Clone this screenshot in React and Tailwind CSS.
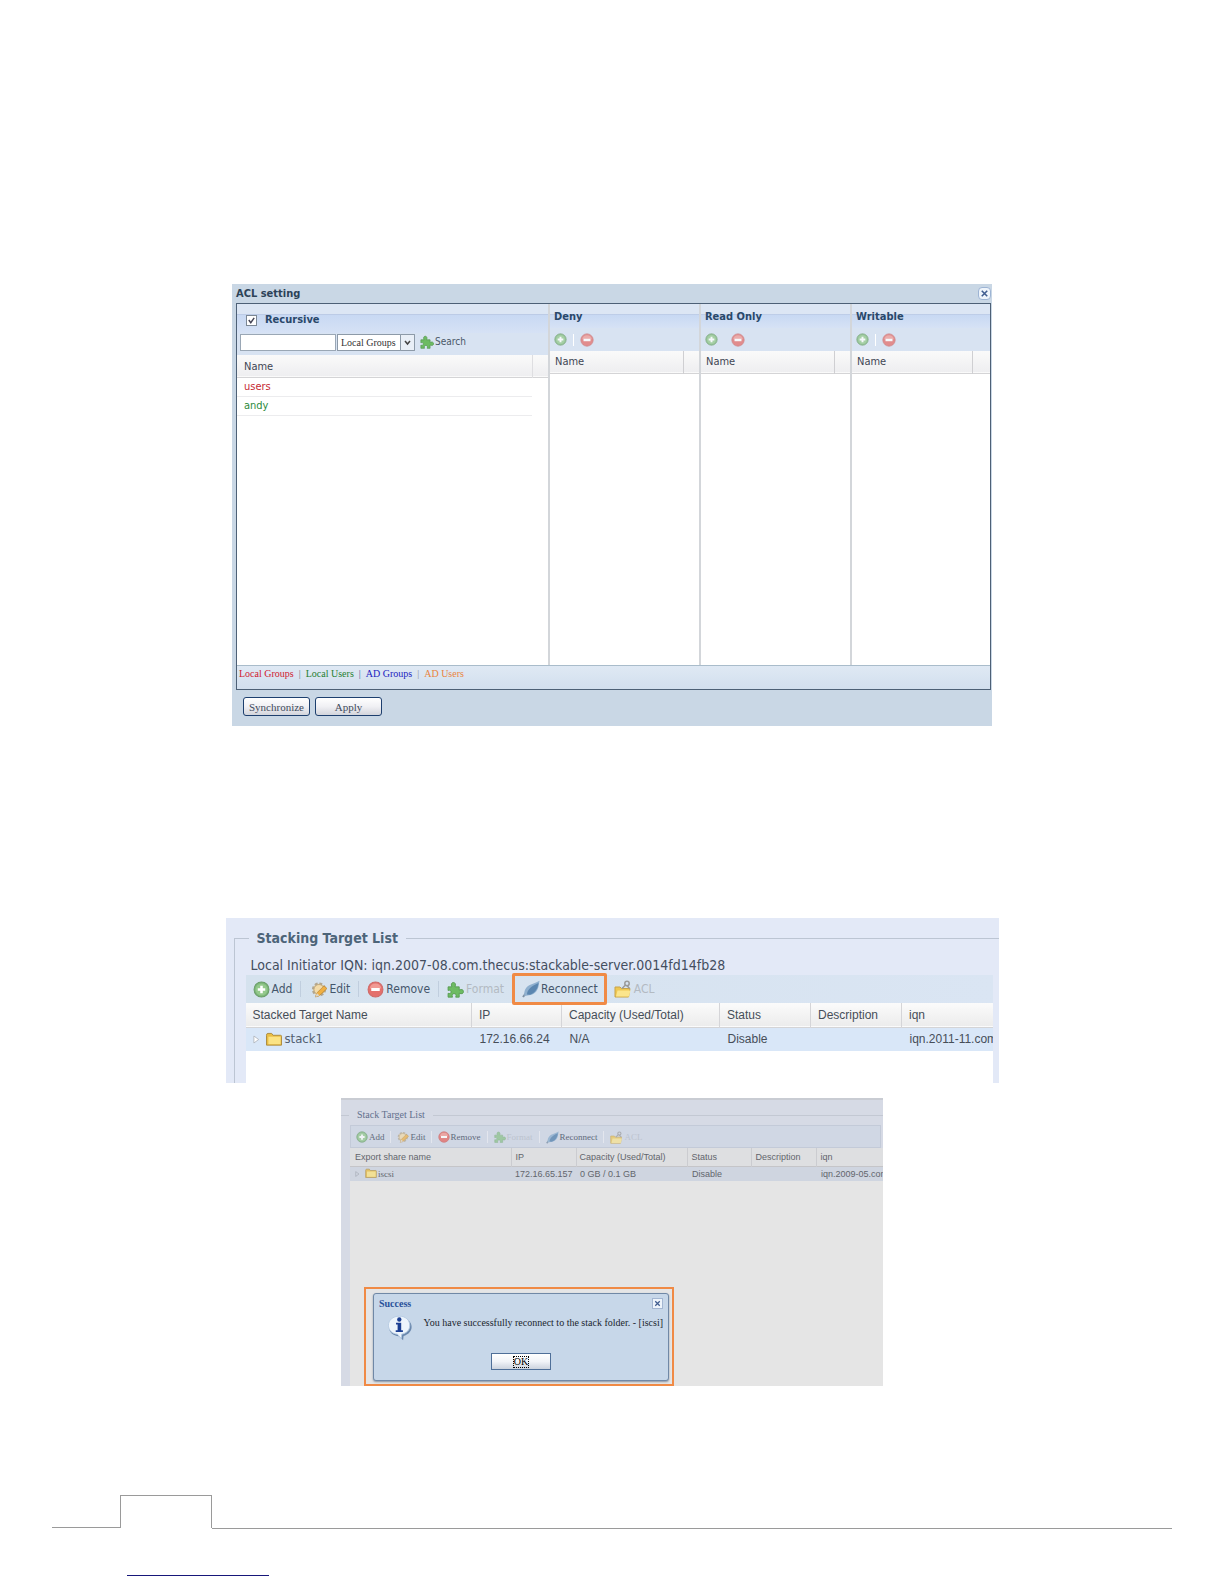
import React, { useState } from 'react';

const AddIcon = ({ className }) => (
    <svg viewBox="0 0 16 16" className={className} aria-hidden="true">
        <circle cx="8" cy="8" r="7" fill="#7fb97a" stroke="#6a9d68" />
        <circle cx="8" cy="8" r="5.5" fill="#94c98c" />
        <path d="M8 4.5v7M4.5 8h7" stroke="#fff" strokeWidth="2.4" />
    </svg>
);

const RemoveIcon = ({ className }) => (
    <svg viewBox="0 0 16 16" className={className} aria-hidden="true">
        <circle cx="8" cy="8" r="7" fill="#e4706c" stroke="#cf6a68" />
        <path d="M2.5 7a5.6 5.6 0 0 1 11 0z" fill="#f19a94" />
        <path d="M4 8h8" stroke="#fff" strokeWidth="2.8" />
    </svg>
);

const EditIcon = ({ className }) => (
    <svg viewBox="0 0 18 16" className={className} aria-hidden="true">
        <circle cx="8" cy="8" r="5.8" fill="#e9c47c" stroke="#b3a68f" strokeWidth="2.6" strokeDasharray="2.8 1.7" />
        <circle cx="8" cy="8" r="5" fill="#f3dba8" stroke="#b9a47d" strokeWidth="0.8" />
        <path d="M4.5 15.500l1.300-4L13 4.400l3 2.600L8.500 14z" fill="#f0b043" stroke="#b98532" strokeWidth="0.7" />
        <path d="M4.500 15.500l1.300-4L8.500 14z" fill="#ded6c8" />
    </svg>
);

const PuzzleIcon = ({ className }) => (
    <svg viewBox="0 0 16 16" className={className} aria-hidden="true">
        <path
            d="M1 5.5h3.6C3.4 3 4.400 1.400 6 1.400s2.700 1.600 1.500 4.100h4v3C14 7.300 15.500 8.300 15.500 10s-1.500 2.600-4 1.500v3.700H8.200c.9-2.200 0-3.300-1.500-3.300s-2.400 1.100-1.500 3.300H1v-3.600c1.900.6 2.800-.2 2.800-1.400S2.900 8.200 1 8.900z"
            fill="#6dbb62"
            stroke="#55984f"
            strokeWidth="0.8"
        />
    </svg>
);

const PlugIcon = ({ className }) => (
    <svg viewBox="0 0 18 18" className={className} aria-hidden="true">
        <path d="M1 17l3-4" stroke="#7d8fa3" strokeWidth="2" />
        <path d="M2.500 16C1.500 11 4 6 9 4.500l5-2L17.500.8l-.8 4.600C16 10 13 14 8.500 15z" fill="#8fb0cf" />
        <path d="M5 14.500C5 10 9 6 16.500 3 16 8.500 13 13 8 14.800z" fill="#5b86b0" />
    </svg>
);

const FolderIcon = ({ className }) => (
    <svg viewBox="0 0 18 16" className={className} aria-hidden="true">
        <path d="M1 3.500Q1 1.500 2.500 1.500h4L8 3.500h8q1 0 1 1V14H1z" fill="#e9be45" stroke="#ab8a3d" />
        <path d="M3 5h13v8H3z" fill="#fbe384" />
    </svg>
);

const AclIcon = ({ className }) => (
    <svg viewBox="0 0 18 18" className={className} aria-hidden="true">
        <path d="M1 7h5l1.500 1.500H16L14.500 17H1z" fill="#eec752" stroke="#c7a348" />
        <path d="M3.500 10.500h13L15 16.500H2z" fill="#fbe58c" />
        <circle cx="13" cy="3.500" r="2.200" fill="none" stroke="#9a9a9a" strokeWidth="1.500" />
        <path d="M11.500 5L8 8.500M13 5.500l2.500 3" stroke="#9a9a9a" strokeWidth="1.500" />
    </svg>
);

const InfoIcon = ({ className }) => (
    <svg viewBox="0 0 28 28" className={className} aria-hidden="true">
        <path d="M14 3c7 0 12 4.500 12 10 0 4.500-3.500 8-8.500 9.500L17 27l-4.500-4.200C6.500 22.300 2 18.500 2 13 2 7 7 3 14 3z" fill="#6b89ae" />
        <path d="M13 1.500c6.500 0 11 4 11 9.500s-3.500 8.500-8.500 9.500L15 25l-4-4.500C5 20 1.500 16 1.500 11S6 1.500 13 1.500z" fill="#eef5fc" stroke="#b7cbe2" />
        <circle cx="13" cy="5" r="2.300" fill="#1c3f93" />
        <path d="M9.500 8.500h5.500v8h1.800v1.800H9.200v-1.800h2v-6.200H9.500z" fill="#1c3f93" />
    </svg>
);

const CloseIcon = ({ className }) => (
    <svg viewBox="0 0 12 12" className={className} aria-hidden="true">
        <path d="M3 3l6 6M9 3l-6 6" stroke="#3f5c8f" strokeWidth="1.700" />
    </svg>
);

const accessLists = [
    { title: 'Deny', width: 'w-[151px]', handle: 'w-4', separator: true },
    { title: 'Read Only', width: 'w-[151px]', handle: 'w-4', separator: false },
    { title: 'Writable', width: 'w-[140px]', handle: 'w-[18px]', separator: true },
];

const members = [
    { name: 'users', color: 'text-[#c62a33]' },
    { name: 'andy', color: 'text-[#2c8a3a]' },
];

const AccessColumn = ({ list }) => (
    <section className={`${list.width} flex flex-col border-l-2 border-[#d3d6da] bg-white`}>
        <div className="h-[11px] border-b border-[#bccbe6] bg-[#dce6f4]"></div>
        <h3 className="-mt-2 h-[21px] bg-linear-to-b from-transparent from-35% via-[#c8d9f3] via-40% to-[#d6e2f5] pl-1 text-[11px] leading-[20px] font-bold text-[#29486a]">
            {list.title}
        </h3>
        <div className="flex h-[23px] items-center bg-[#d8e3f2] pl-1">
            <button aria-label={`Add to ${list.title}`} className="opacity-75">
                <AddIcon className="h-[13px] w-[13px]" />
            </button>
            <span className={`mx-[6px] h-3 w-px ${list.separator ? 'bg-white' : ''}`}></span>
            <button aria-label={`Remove from ${list.title}`} className="opacity-75">
                <RemoveIcon className="h-[14px] w-[14px]" />
            </button>
        </div>
        <table className="w-full table-fixed">
            <thead>
                <tr className="h-[22px] border-b border-[#d4d4d6] bg-linear-to-b from-[#fafafa] to-[#eeeef0]">
                    <th className="pt-px pl-[5px] text-left text-[11px] leading-4 font-normal text-[#3f4654]">Name</th>
                    <th className={`${list.handle} border-l border-[#cfcfd2]`}></th>
                </tr>
            </thead>
        </table>
    </section>
);

const AclSetting = () => {
    const [recursive, setRecursive] = useState(true);
    const [query, setQuery] = useState('');

    return (
        <section className="mx-auto w-full max-w-[760px] bg-[#c9d7e5] pr-px pb-[10px] pl-1 font-['DejaVu_Sans_Condensed','DejaVu_Sans',sans-serif]">
            <header className="flex h-[19px] items-center justify-between">
                <h2 className="text-[11px] leading-4 font-bold text-[#2c4257]">ACL setting</h2>
                <button aria-label="Close" className="rounded-sm border border-[#9db4d4] bg-[#eef4fb]">
                    <CloseIcon className="h-[11px] w-[11px]" />
                </button>
            </header>
            <div className="border border-[#4d6076] bg-[#d9e4f1]">
                <div className="flex h-[361px]">
                    <section className="flex flex-1 flex-col bg-white">
                        <div className="h-[11px] border-b border-[#bccbe6] bg-[#dce6f4]"></div>
                        <label className="flex h-[18px] items-center gap-2 bg-linear-to-b from-[#c8d9f3] to-[#d6e2f5] pb-2 pl-[9px] text-[11px] font-bold text-[#29486a]">
                            <input
                                type="checkbox"
                                checked={recursive}
                                onChange={(e) => setRecursive(e.target.checked)}
                                className="h-[11px] w-[11px] appearance-none border border-[#7b8794] bg-white bg-center bg-no-repeat checked:bg-[url('data:image/svg+xml,%3Csvg%20xmlns=%22http://www.w3.org/2000/svg%22%20viewBox=%220%200%2010%2010%22%3E%3Cpath%20d=%22M2%204.500L4.200%207.500L8%202%22%20fill=%22none%22%20stroke=%22%23445%22%20stroke-width=%221.600%22/%3E%3C/svg%3E')]"
                            />
                            Recursive
                        </label>
                        <div className="flex h-[22px] items-start bg-[#d8e3f2] pt-px pl-[3px]">
                            <input
                                type="text"
                                aria-label="Search name"
                                value={query}
                                onChange={(e) => setQuery(e.target.value)}
                                className="h-[17px] w-[96px] border border-[#9aa7b5] bg-white px-1 text-[11px]"
                            />
                            <div className="relative ml-px h-[17px] w-[78px]">
                                <select
                                    aria-label="Account type"
                                    className="block h-[17px] w-full appearance-none border border-[#8d9aa8] bg-white pl-[3px] font-['Liberation_Serif',serif] text-[10px] leading-[15px] text-[#333]"
                                >
                                    <option>Local Groups</option>
                                    <option>Local Users</option>
                                    <option>AD Groups</option>
                                    <option>AD Users</option>
                                </select>
                                <svg viewBox="0 0 15 17" className="pointer-events-none absolute top-0 right-0 h-[17px] w-[15px]" aria-hidden="true">
                                    <path d="M.5 .5h14v16H.5z" fill="#e9eff7" stroke="#8d9aa8" />
                                    <path d="M5 7l2.500 3L10 7" fill="none" stroke="#444" strokeWidth="1.500" />
                                </svg>
                            </div>
                            <button className="ml-[5px] flex items-center gap-px text-[10px] leading-4 text-[#4a5768]">
                                <PuzzleIcon className="h-[14px] w-[14px]" />
                                Search
                            </button>
                        </div>
                        <table className="w-full table-fixed text-[11px] leading-4">
                            <thead>
                                <tr className="h-[22px] border-b border-[#d4d4d6] bg-linear-to-b from-[#fafafa] to-[#eeeef0]">
                                    <th className="pt-[2px] pl-[7px] text-left font-normal text-[#3f4654]">Name</th>
                                    <th className="w-4 border-l border-[#dedee1]"></th>
                                </tr>
                            </thead>
                            <tbody>
                                {members.map((member) => (
                                    <tr key={member.name} className="h-[19px]">
                                        <td className={`border-b border-[#ececee] pl-[7px] ${member.color}`}>{member.name}</td>
                                        <td></td>
                                    </tr>
                                ))}
                            </tbody>
                        </table>
                    </section>
                    {accessLists.map((list) => (
                        <AccessColumn key={list.title} list={list} />
                    ))}
                </div>
                <div className="flex h-6 gap-[5px] border-t border-[#a9bccb] bg-linear-to-b from-[#dfe9f4] to-[#d2dfee] pl-[2px] font-['Liberation_Serif',serif] text-[10px] leading-4">
                    <span className="text-[#d02030]">Local Groups</span>
                    <span className="text-[#6a7280]">|</span>
                    <span className="text-[#1f8030]">Local Users</span>
                    <span className="text-[#4a52a0]">|</span>
                    <span className="text-[#1c1cc0]">AD Groups</span>
                    <span className="text-[#8a9098]">|</span>
                    <span className="text-[#ea8440]">AD Users</span>
                </div>
            </div>
            <div className="mt-[7px] flex gap-[5px] pl-[7px] font-['Liberation_Serif',serif] text-[11px] leading-4 text-[#3f4a5c]">
                <button className="h-[19px] w-[67px] rounded-[3px] border border-[#1d3f6e] bg-linear-to-b from-white via-[#f0f0f4] to-[#d3d5dc]">Synchronize</button>
                <button className="h-[19px] w-[67px] rounded-[3px] border border-[#1d3f6e] bg-linear-to-b from-white via-[#f0f0f4] to-[#d3d5dc]">Apply</button>
            </div>
        </section>
    );
};

const StackingTargetList = () => (
    <section className="mx-auto h-[165px] w-full max-w-[773px] overflow-hidden bg-[#e3e9f7] pt-[10px] pl-2 font-['DejaVu_Sans_Condensed','DejaVu_Sans',sans-serif]">
        <fieldset className="h-full border-t border-l border-[#bcc5d3] pr-[6px] pl-[11px]">
            <legend className="ml-[3px] px-2 text-[14px] leading-[20px] font-bold text-[#4d6479]">Stacking Target List</legend>
            <p className="pt-[8px] pl-[5px] text-[14px] leading-[19px] text-[#444e5f]">
                Local Initiator IQN: iqn.2007-08.com.thecus:stackable-server.0014fd14fb28
            </p>
            <div className="flex h-7 items-center bg-linear-to-r from-[#d5e2ee] to-[#dae5f3] text-[12px] leading-4 text-[#44566b]">
                <button className="flex items-center gap-[2px] pl-[7px]">
                    <AddIcon className="h-[17px] w-[17px]" />
                    Add
                </button>
                <span className="ml-2 h-4 w-px bg-[#c0cede]"></span>
                <button className="ml-[10px] flex items-center">
                    <EditIcon className="h-[17px] w-[18px]" />
                    Edit
                </button>
                <span className="ml-2 h-4 w-px bg-[#c0cede]"></span>
                <button className="ml-2 flex items-center gap-[2px]">
                    <RemoveIcon className="h-[17px] w-[17px]" />
                    Remove
                </button>
                <span className="ml-2 h-4 w-px bg-[#c0cede]"></span>
                <button disabled className="ml-2 flex items-center gap-[2px] text-[#b3bac2]">
                    <PuzzleIcon className="h-[17px] w-[17px]" />
                    Format
                </button>
                <button className="z-10 ml-2 flex h-8 items-center rounded-[2px] border-[3px] border-[#f08a45] px-[6px]">
                    <PlugIcon className="h-[18px] w-[20px]" />
                    Reconnect
                </button>
                <button disabled className="ml-[7px] flex items-center gap-[2px] text-[#b3bac2]">
                    <AclIcon className="h-[18px] w-[18px]" />
                    ACL
                </button>
            </div>
            <table className="w-full table-fixed overflow-hidden font-['Liberation_Sans',sans-serif] text-[12px] leading-4 whitespace-nowrap text-[#464e58]">
                <thead>
                    <tr className="h-6 border-b border-[#d4d4d6] bg-linear-to-b from-[#fbfbfb] to-[#ececec] text-left">
                        <th className="pl-[7px] font-normal">Stacked Target Name</th>
                        <th className="w-[90px] border-l border-[#d5d5d8] pl-[7px] font-normal">IP</th>
                        <th className="w-[158px] border-l border-[#d5d5d8] pl-[7px] font-normal">Capacity (Used/Total)</th>
                        <th className="w-[91px] border-l border-[#d5d5d8] pl-[7px] font-normal">Status</th>
                        <th className="w-[91px] border-l border-[#d5d5d8] pl-[7px] font-normal">Description</th>
                        <th className="w-[91px] border-l border-[#d5d5d8] pl-[7px] font-normal">iqn</th>
                    </tr>
                </thead>
                <tbody>
                    <tr className="h-[24px] bg-[#d9e7f8]">
                        <td className="pl-[7px]">
                            <div className="flex items-center font-['DejaVu_Sans_Condensed','DejaVu_Sans',sans-serif] text-[13px] text-[#526070]">
                                <svg viewBox="0 0 8 10" className="mr-[5px] h-[9px] w-[7px]" aria-hidden="true">
                                    <path d="M1 1l5.500 4L1 9z" fill="#fff" stroke="#b0b6be" />
                                </svg>
                                <FolderIcon className="mr-[2px] h-[15px] w-[18px]" />
                                stack1
                            </div>
                        </td>
                        <td className="pl-2">172.16.66.24</td>
                        <td className="pl-2">N/A</td>
                        <td className="pl-2">Disable</td>
                        <td></td>
                        <td className="overflow-hidden pl-2">iqn.2011-11.com</td>
                    </tr>
                </tbody>
            </table>
            <div className="h-10 bg-white"></div>
        </fieldset>
    </section>
);

const SuccessDialog = () => (
    <div className="absolute bottom-0 left-[23px] w-[310px] border-2 border-[#f08a45] bg-[#e5e5e6] pt-1 pr-[3px] pb-[3px] pl-[7px]">
        <div role="dialog" aria-label="Success" className="rounded-[3px] border border-[#7088a6] bg-[#c7d7e9] px-[5px] shadow-[0_1px_2px_#8a94a2]">
            <div className="flex h-[19px] items-center justify-between">
                <h3 className="text-[10px] leading-4 font-bold text-[#27509a]">Success</h3>
                <button aria-label="Close" className="border border-[#a3b6d2] bg-[#eef4fb]">
                    <CloseIcon className="h-[9px] w-[9px]" />
                </button>
            </div>
            <div className="flex pl-2">
                <InfoIcon className="mt-px h-7 w-7" />
                <p className="mt-[2px] ml-[10px] text-[10px] leading-4 whitespace-nowrap text-[#20252d]">
                    You have successfully reconnect to the stack folder. - [iscsi]
                </p>
            </div>
            <div className="flex justify-center pt-[11px] pb-[10px]">
                <button className="flex h-[17px] w-[60px] items-center justify-center border border-[#4f6f98] bg-linear-to-b from-white via-[#f2f4f8] to-[#ccd3de] text-[10px] leading-3 text-black">
                    <span className="border border-dotted border-black leading-[10px]">OK</span>
                </button>
            </div>
        </div>
    </div>
);

const StackTargetList = () => (
    <section className="relative mx-auto h-[288px] w-full max-w-[542px] overflow-hidden border-t-2 border-[#c9ccd3] bg-[#d6dae5] pt-[5px] font-['Liberation_Serif',serif]">
        <fieldset className="h-full border-t border-[#c3c8d3] pl-[9px]">
            <legend className="ml-[-1px] px-2 text-[10px] leading-[20px] text-[#62708d]">Stack Target List</legend>
            <div className="mr-[2px] flex h-[23px] items-center border border-[#c3cad8] bg-[#d0d7e4] pt-px text-[9px] leading-3 text-[#606a7b]">
                <button className="flex items-center gap-px pl-[5px]">
                    <AddIcon className="h-3 w-3 opacity-70" />
                    Add
                </button>
                <span className="ml-[5px] h-3 w-px bg-[#e3e6ee]"></span>
                <button className="ml-[6px] flex items-center gap-px">
                    <EditIcon className="h-3 w-[13px] opacity-70" />
                    Edit
                </button>
                <span className="ml-[5px] h-3 w-px bg-[#e3e6ee]"></span>
                <button className="ml-[6px] flex items-center gap-px">
                    <RemoveIcon className="h-3 w-3 opacity-80" />
                    Remove
                </button>
                <span className="ml-[6px] h-3 w-px bg-[#e3e6ee]"></span>
                <button disabled className="ml-[6px] flex items-center gap-px text-[#bcc3cf]">
                    <PuzzleIcon className="h-3 w-3 opacity-50" />
                    Format
                </button>
                <span className="ml-[6px] h-3 w-px bg-[#e3e6ee]"></span>
                <button className="ml-[6px] flex items-center gap-px">
                    <PlugIcon className="h-[13px] w-[13px] opacity-80" />
                    Reconnect
                </button>
                <span className="ml-[6px] h-3 w-px bg-[#e3e6ee]"></span>
                <button disabled className="ml-[6px] flex items-center gap-px text-[#bcc3cf]">
                    <AclIcon className="h-[13px] w-[13px] opacity-70" />
                    ACL
                </button>
            </div>
            <table className="w-full table-fixed overflow-hidden font-['Liberation_Sans',sans-serif] text-[9px] leading-3 whitespace-nowrap text-[#62656c]">
                <thead>
                    <tr className="h-[18px] border-b border-[#c5c5c8] bg-[#dedfe1] text-left">
                        <th className="pl-[5px] font-normal">Export share name</th>
                        <th className="w-[65px] border-l border-[#cbccd0] pl-1 font-normal">IP</th>
                        <th className="w-[111px] border-l border-[#cbccd0] pl-[3px] font-normal">Capacity (Used/Total)</th>
                        <th className="w-[64px] border-l border-[#cbccd0] pl-1 font-normal">Status</th>
                        <th className="w-[65px] border-l border-[#cbccd0] pl-1 font-normal">Description</th>
                        <th className="w-[67px] border-l border-[#cbccd0] pl-1 font-normal">iqn</th>
                    </tr>
                </thead>
                <tbody>
                    <tr className="h-[15px] bg-[#cfd5e0]">
                        <td className="pl-[5px]">
                            <div className="flex items-center font-['Liberation_Serif',serif] text-[9px]">
                                <svg viewBox="0 0 8 10" className="mr-[5px] h-[6px] w-[5px]" aria-hidden="true">
                                    <path d="M1 1l5.500 4L1 9z" fill="none" stroke="#a3a8b2" />
                                </svg>
                                <FolderIcon className="mr-px h-[11px] w-3 opacity-80" />
                                iscsi
                            </div>
                        </td>
                        <td className="pl-1">172.16.65.157</td>
                        <td className="pl-1">0 GB / 0.1 GB</td>
                        <td className="pl-[5px]">Disable</td>
                        <td></td>
                        <td className="overflow-hidden pl-[5px]">iqn.2009-05.com</td>
                    </tr>
                </tbody>
            </table>
            <div className="h-full bg-[#e5e5e5]"></div>
        </fieldset>
        <SuccessDialog />
    </section>
);

const PageFooter = () => (
    <footer className="mt-[109px] pr-[52px] pl-[52px]">
        <div className="flex">
            <div className="h-[33px] w-[68px] border-b border-[#9a9a9a]"></div>
            <div className="h-[33px] w-[92px] border-t border-r border-l border-[#9a9a9a]"></div>
            <div className="h-[34px] flex-1 border-b border-[#9a9a9a]"></div>
        </div>
        <div className="mt-[46px] mb-2 ml-[75px] h-px w-[142px] bg-[#17177a]"></div>
    </footer>
);

const App = () => {
    return (
        <main className="min-h-screen bg-white pt-[284px]">
            <AclSetting />
            <div className="mt-48">
                <StackingTargetList />
            </div>
            <div className="mt-[15px]">
                <StackTargetList />
            </div>
            <PageFooter />
        </main>
    );
};

export default App;
